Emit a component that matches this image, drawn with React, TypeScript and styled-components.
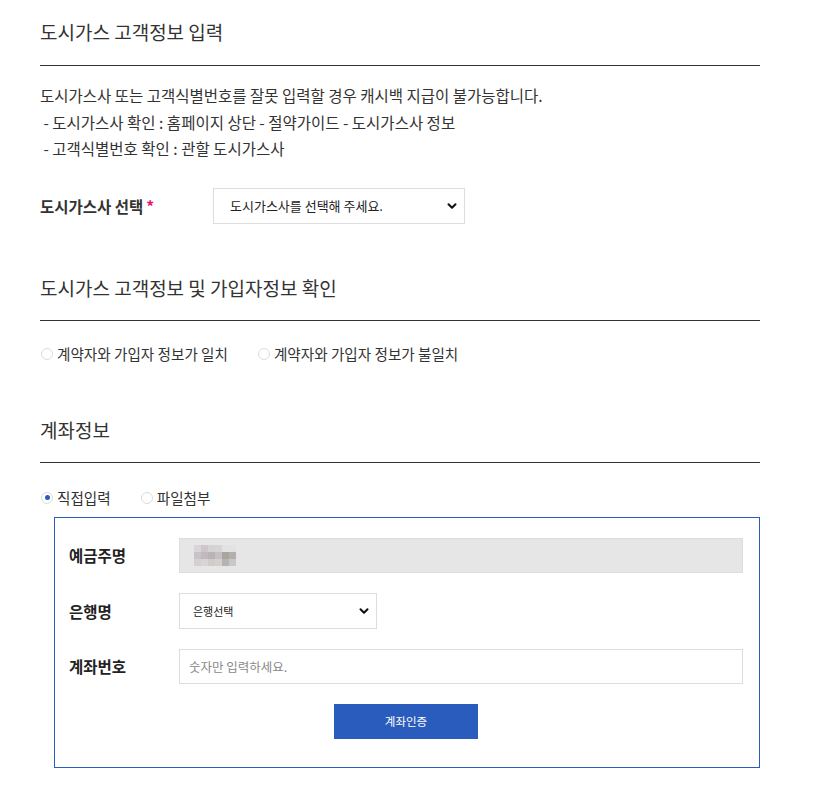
import React, { useState } from 'react';
import styled, { createGlobalStyle } from 'styled-components';
import { ChevronDown } from 'lucide-react';

const GlobalStyle = createGlobalStyle`
	body {
		margin: 0;
		background: #fff;
		color: #333;
		font-family: 'Noto Sans CJK KR', 'Noto Sans', sans-serif;
	}
`;

const BLUE = '#2a5cbd';

const mosaic = [
	['#d9d4d6', '#cfc6cc', '#d6d2d4', '#d8d4d6', '#e2e2e2', '#e2e2e2'],
	['#c9c2c6', '#c2b8bf', '#b9b3b3', '#c7bfc6', '#aaa49f', '#b3aeb0'],
	['#d4d0d2', '#d7d3d6', '#d0ccca', '#d3d0d0', '#b7b3b0', '#c9c7c7'],
];

export default function App() {
	const [matched, setMatched] = useState<string | null>(null);
	const [inputType, setInputType] = useState('direct');

	return (
		<Page>
			<GlobalStyle />
			<SectionTitle $top={18} $bottom={19}>도시가스 고객정보 입력</SectionTitle>
			<Notice>
				<p>도시가스사 또는 고객식별번호를 잘못 입력할 경우 캐시백 지급이 불가능합니다.</p>
				<p>&nbsp;- 도시가스사 확인 : 홈페이지 상단 - 절약가이드 - 도시가스사 정보</p>
				<p>&nbsp;- 고객식별번호 확인 : 관할 도시가스사</p>
			</Notice>
			<CompanyRow>
				<FieldLabel>
					도시가스사 선택<Required>*</Required>
				</FieldLabel>
				<SelectWrap $width={252}>
					<Select $size={13} $pad={16}>
						<option>도시가스사를 선택해 주세요.</option>
					</Select>
					<Chevron size={14} strokeWidth={3.5} />
				</SelectWrap>
			</CompanyRow>

			<SectionTitle $top={50}>도시가스 고객정보 및 가입자정보 확인</SectionTitle>
			<RadioRow $gap={29}>
				<Radio checked={matched === 'same'} onClick={() => setMatched('same')} label="계약자와 가입자 정보가 일치" />
				<Radio checked={matched === 'diff'} onClick={() => setMatched('diff')} label="계약자와 가입자 정보가 불일치" />
			</RadioRow>

			<SectionTitle $top={52}>계좌정보</SectionTitle>
			<RadioRow $gap={29} $top={25}>
				<Radio checked={inputType === 'direct'} onClick={() => setInputType('direct')} label="직접입력" />
				<Radio checked={inputType === 'file'} onClick={() => setInputType('file')} label="파일첨부" />
			</RadioRow>

			<AccountBox>
				<FormRow>
					<BoxLabel>예금주명</BoxLabel>
					<ReadOnlyField>
						<svg width="42" height="22" viewBox="0 0 42 22">
							{mosaic.map((row, r) =>
								row.map((c, i) => <rect key={`${r}-${i}`} x={i * 7} y={r * 7 + 1} width="7" height="7" fill={c} />)
							)}
						</svg>
					</ReadOnlyField>
				</FormRow>
				<FormRow>
					<BoxLabel>은행명</BoxLabel>
					<SelectWrap $width={198}>
						<Select $size={11} $pad={13}>
							<option>은행선택</option>
						</Select>
						<Chevron size={14} strokeWidth={3.5} />
					</SelectWrap>
				</FormRow>
				<FormRow>
					<BoxLabel>계좌번호</BoxLabel>
					<TextField placeholder="숫자만 입력하세요." />
				</FormRow>
				<ButtonRow>
					<VerifyButton>계좌인증</VerifyButton>
				</ButtonRow>
			</AccountBox>
		</Page>
	);
}

function Radio({ checked, onClick, label }: { checked: boolean; onClick: () => void; label: string }) {
	return (
		<RadioLabel onClick={onClick}>
			<RadioCircle $checked={checked} />
			{label}
		</RadioLabel>
	);
}

const Page = styled.div`
	width: 720px;
	padding: 0 0 40px 40px;
	box-sizing: content-box;
`;

const SectionTitle = styled.h2<{ $top: number; $bottom?: number }>`
	margin: ${p => p.$top}px 0 0;
	padding-bottom: ${p => p.$bottom ?? 18}px;
	border-bottom: 1px solid #333;
	font-size: 19px;
	font-weight: 400;
	line-height: 28px;
	color: #333;
`;

const Notice = styled.div`
	margin-top: 16px;
	font-size: 15.5px;
	line-height: 26.5px;
	color: #333;

	p {
		margin: 0;
	}
`;

const CompanyRow = styled.div`
	display: flex;
	align-items: center;
	margin-top: 26px;
`;

const FieldLabel = styled.span`
	width: 173px;
	font-size: 15.5px;
	font-weight: 700;
	color: #333;
`;

const Required = styled.span`
	margin-left: 3px;
	color: #e6186f;
`;

const SelectWrap = styled.div<{ $width: number }>`
	position: relative;
	width: ${p => p.$width}px;
`;

const Select = styled.select<{ $size: number; $pad: number }>`
	appearance: none;
	width: 100%;
	height: 36px;
	padding: 0 30px 0 ${p => p.$pad}px;
	border: 1px solid #ddd;
	border-radius: 0;
	background: #fff;
	font-family: inherit;
	font-size: ${p => p.$size}px;
	color: #222;
	outline: none;
`;

const Chevron = styled(ChevronDown)`
	position: absolute;
	right: 6px;
	top: 50%;
	transform: translateY(-50%);
	color: #111;
	pointer-events: none;
`;

const RadioRow = styled.div<{ $gap: number; $top?: number }>`
	display: flex;
	align-items: center;
	gap: ${p => p.$gap}px;
	margin-top: ${p => p.$top ?? 23}px;
	height: 20px;
`;

const RadioLabel = styled.label`
	display: flex;
	align-items: center;
	gap: 4px;
	font-size: 14.6px;
	color: #333;
	cursor: pointer;
`;

const RadioCircle = styled.span<{ $checked: boolean }>`
	position: relative;
	margin-left: 1px;
	width: 12px;
	height: 12px;
	border: 1px solid #dcdcdc;
	border-radius: 50%;
	background: #fff;
	box-sizing: border-box;
	flex-shrink: 0;

	&::after {
		content: '';
		display: ${p => (p.$checked ? 'block' : 'none')};
		position: absolute;
		left: 50%;
		top: 50%;
		width: 5px;
		height: 5px;
		margin: -2.5px 0 0 -2.5px;
		border-radius: 50%;
		background: ${BLUE};
	}
`;

const AccountBox = styled.div`
	margin: 9px 0 0 14px;
	padding: 20px 16px 28px 14px;
	border: 1px solid ${BLUE};
	display: flex;
	flex-direction: column;
	gap: 20px;
`;

const FormRow = styled.div`
	display: flex;
	align-items: center;
`;

const BoxLabel = styled.span`
	width: 110px;
	flex-shrink: 0;
	font-size: 15.5px;
	font-weight: 700;
	color: #222;
`;

const ReadOnlyField = styled.div`
	flex: 1;
	height: 35px;
	display: flex;
	align-items: center;
	padding-left: 14px;
	background: #e6e6e6;
	border: 1px solid #ddd;
	box-sizing: border-box;
`;

const TextField = styled.input`
	flex: 1;
	height: 35px;
	padding: 0 9px;
	border: 1px solid #ddd;
	box-sizing: border-box;
	font-family: inherit;
	font-size: 12.5px;
	color: #333;
	outline: none;

	&::placeholder {
		color: #888;
	}
`;

const ButtonRow = styled.div`
	display: flex;
	justify-content: center;
`;

const VerifyButton = styled.button`
	width: 144px;
	height: 35px;
	border: 0;
	background: ${BLUE};
	color: #fff;
	font-family: inherit;
	font-size: 11.5px;
	cursor: pointer;
`;
